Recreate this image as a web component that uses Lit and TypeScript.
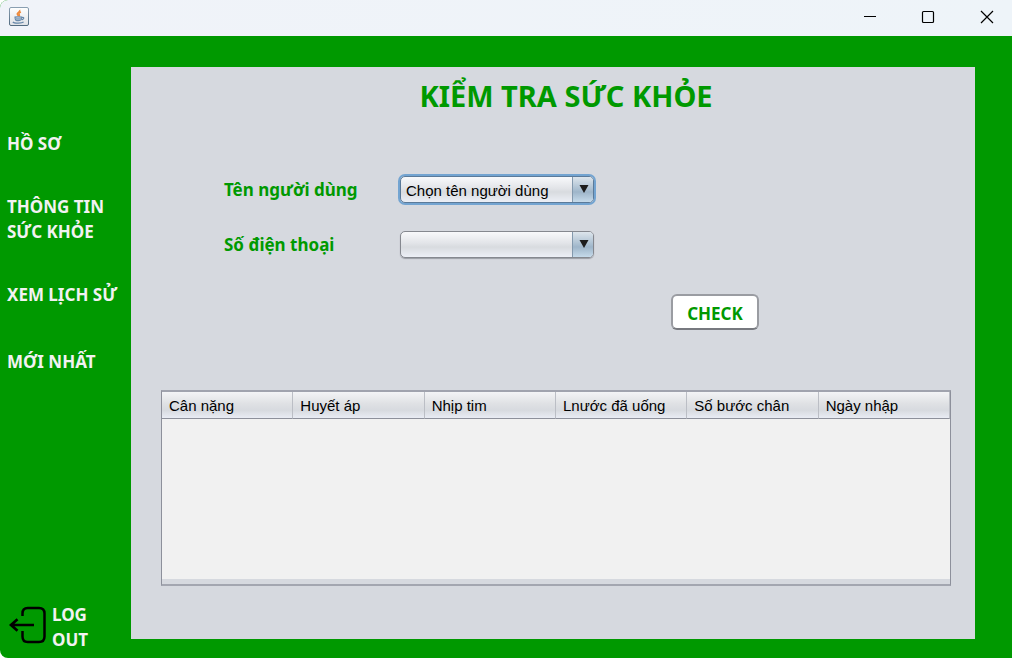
import { LitElement, html, css, svg } from "lit";
import { customElement, property, state } from "lit/decorators.js";

@customElement("title-bar")
class TitleBar extends LitElement {
  static styles = css`
    :host {
      display: flex;
      justify-content: space-between;
      height: 36px;
      background: linear-gradient(90deg, #f0f3f9, #eef4f9);
    }
    .app-icon {
      width: 20px;
      height: 20px;
      margin: 7px 0 0 9px;
    }
    .controls {
      display: flex;
    }
    .control {
      width: 58px;
      padding: 0;
      border: 0;
      background: none;
      display: flex;
      align-items: center;
      justify-content: center;
    }
    .close {
      width: 55px;
      padding-right: 10px;
      justify-content: flex-end;
    }
    .control svg {
      width: 30px;
      height: 30px;
      margin-top: -4px;
    }
  `;

  render() {
    return html`
      <svg class="app-icon" viewBox="0 0 20 20" aria-hidden="true">
        <defs>
          <linearGradient id="tile" x1="0" y1="0" x2="0" y2="1">
            <stop offset="0" stop-color="#fff" />
            <stop offset="1" stop-color="#dfe2e6" />
          </linearGradient>
          <linearGradient id="edge" x1="0" y1="0" x2="0" y2="1">
            <stop offset="0" stop-color="#8a9fb1" />
            <stop offset="1" stop-color="#526b80" />
          </linearGradient>
        </defs>
        <rect x=".5" y=".5" width="19" height="18" rx="1.5" fill="url(#tile)" stroke="url(#edge)" />
        <path d="M10.600 3C11.800 5 7.400 5.500 8.300 7.200 8.700 8 9.400 8.300 9.300 9.200M11.900 5C9.600 6 9.500 6.700 10.300 7.600 10.700 8.100 10.300 8.800 9.900 9.200" fill="none" stroke="#ee8a3c" stroke-width="1.500" />
        <path d="M5.500 10.200C7 9.900 11 9.900 13 10.200M13 10.500C15.500 10 15.200 12.300 12.700 12.800M6 10.500C6.300 13.400 7 13.700 9.500 13.700S12.400 13 12.800 10.500M3.900 14.800C5 16.500 13 16.500 14.600 14.900" fill="none" stroke="#6485a8" stroke-width="1.200" />
        <path d="M6.500 11.600H12.400M6.900 12.700H12" stroke="#8ba5bf" stroke-width="1" />
      </svg>
      <div class="controls">
        <button class="control" aria-label="Minimize">
          <svg viewBox="0 0 30 30"><path d="M9 15.500H21" stroke="#000" fill="none" /></svg>
        </button>
        <button class="control" aria-label="Maximize">
          <svg viewBox="0 0 30 30"><rect x="9.500" y="10.500" width="11" height="11" rx="1" stroke="#000" stroke-width="1.200" fill="none" /></svg>
        </button>
        <button class="control close" aria-label="Close">
          <svg viewBox="0 0 30 30"><path d="M9 10L21 22M21 10L9 22" stroke="#000" stroke-width="1.200" fill="none" /></svg>
        </button>
      </div>
    `;
  }
}

@customElement("side-menu")
class SideMenu extends LitElement {
  static styles = css`
    :host {
      display: flex;
      flex-direction: column;
      justify-content: space-between;
      box-sizing: border-box;
      padding: 95px 0 6px 7px;
      font-family: "Noto Sans", "Open Sans", sans-serif;
    }
    nav {
      display: flex;
      flex-direction: column;
      gap: 38px;
    }
    .item {
      padding: 0;
      border: 0;
      background: none;
      color: #f2f2f2;
      font: inherit;
      font-size: 17px;
      font-weight: 700;
      line-height: 25px;
      text-align: left;
      white-space: pre-line;
    }
    .newest {
      margin-top: 4px;
    }
    .logout {
      display: flex;
      align-items: center;
      gap: 6px;
    }
    .logout svg {
      width: 39px;
      height: 42px;
    }
  `;

  render() {
    return html`
      <nav>
        <button class="item">HỒ SƠ</button>
        <button class="item">${"THÔNG TIN\nSỨC KHỎE"}</button>
        <button class="item">XEM LỊCH SỬ</button>
        <button class="item newest">MỚI NHẤT</button>
      </nav>
      <button class="item logout">
        <svg viewBox="0 5 39 42" fill="none" stroke="#000" stroke-width="2.500" aria-hidden="true">
          <path d="M15.500 15V12.500Q15.500 7 20.700 7H32Q37.500 7 37.500 12.500V35.500Q37.500 41 32 41H20.700Q15.500 41 15.500 35.500V30" />
          <path d="M27 24H4M10.500 18.200L4 24L10.500 29.800" stroke-width="2.700" />
        </svg>
        <span>${"LOG\nOUT"}</span>
      </button>
    `;
  }
}

@customElement("check-form")
class CheckForm extends LitElement {
  static styles = css`
    :host {
      display: grid;
      grid-template-columns: 174px 198px;
      row-gap: 25px;
      align-items: center;
      padding: 0 0 0 63px;
      font-family: "Noto Sans", "Open Sans", sans-serif;
    }
    label {
      color: #009900;
      font-size: 17px;
      font-weight: 700;
      line-height: 24px;
    }
    .combo {
      display: grid;
      grid-template-columns: 1fr 22px;
      height: 30px;
      padding: 1px 2px 3px;
      box-sizing: border-box;
    }
    select {
      grid-area: 1 / 1 / 2 / 3;
      appearance: none;
      min-width: 0;
      height: 27px;
      padding: 2px 26px 0 5px;
      border: 1px solid #85888f;
      border-radius: 5px;
      outline: 0;
      color: #000;
      background: linear-gradient(#f8f9fb, #e2e4e8 45%, #d8dbdf 60%, #eceff6);
      box-shadow: 0 1px 1px #9a9da5;
      font: 15px "Liberation Sans", Arial, sans-serif;
    }
    .active select {
      border-color: #5b7a99;
      box-shadow: 0 0 0 2px #73a4d1;
    }
    .arrow {
      grid-area: 1 / 2;
      z-index: 1;
      height: 25px;
      margin: 1px 1px 0 0;
      border-left: 1px solid #8399ad;
      border-radius: 0 4px 4px 0;
      background: linear-gradient(#dde5ec, #a9bed0 50%, #9eb5c9 60%, #c5daea);
      pointer-events: none;
    }
    .arrow svg {
      display: block;
      width: 20px;
      height: 25px;
    }
    .check {
      grid-column: 2;
      justify-self: end;
      margin: 9px -163px 0 0;
      width: 88px;
      height: 36px;
      padding: 2px 0 0;
      border: 2px solid #9a9ca2;
      border-bottom-color: #77797f;
      border-radius: 6px;
      color: #009900;
      background: #fff;
      font: 700 17px "Noto Sans", "Open Sans", sans-serif;
    }
  `;

  @state() private focused = "user";

  private combo(id: string, options: string[]) {
    return html`
      <div class="combo ${this.focused === id ? "active" : ""}">
        <select id=${id} @focus=${() => (this.focused = id)}>
          ${options.map((o) => html`<option>${o}</option>`)}
        </select>
        <span class="arrow">
          <svg viewBox="0 0 20 25" aria-hidden="true">${svg`<path d="M6.500 8H15.500L11 16Z" fill="#1c1c1c" />`}</svg>
        </span>
      </div>
    `;
  }

  render() {
    return html`
      <label for="user">Tên người dùng</label>
      ${this.combo("user", ["Chọn tên người dùng"])}
      <label for="phone">Số điện thoại</label>
      ${this.combo("phone", [""])}
      <button class="check">CHECK</button>
    `;
  }
}

@customElement("health-table")
class HealthTable extends LitElement {
  static styles = css`
    :host {
      display: flex;
      flex-direction: column;
      box-sizing: border-box;
      border: 1px solid #8d909b;
      border-top: 2px solid #a0a3ae;
      border-bottom: 2px solid #a3a6b0;
      background: #d6d9df;
    }
    .viewport {
      flex: 1;
      margin-bottom: 5px;
      background: #f1f1f1;
    }
    table {
      width: 100%;
      table-layout: fixed;
      border-collapse: separate;
      border-spacing: 0;
    }
    th {
      height: 27px;
      padding: 2px 0 0 7px;
      box-sizing: border-box;
      border-right: 1px solid #bbbec5;
      border-bottom: 1px solid #8d909b;
      background: linear-gradient(#f3f4f6, #dfe1e4 45%, #d7dadf 70%, #e9ecf4);
      color: #000;
      font: 15px/22px "Liberation Sans", Arial, sans-serif;
      text-align: left;
      white-space: nowrap;
    }
  `;

  @property({ attribute: false }) columns: string[] = [];

  render() {
    return html`
      <div class="viewport">
        <table>
          <thead>
            <tr>
              ${this.columns.map((c) => html`<th scope="col">${c}</th>`)}
            </tr>
          </thead>
          <tbody></tbody>
        </table>
      </div>
    `;
  }
}

@customElement("app-root")
class AppRoot extends LitElement {
  static styles = css`
    :host {
      display: flex;
      flex-direction: column;
      min-height: 100vh;
      overflow: hidden;
      border-radius: 8px 0 0 8px;
      background: #009900;
    }
    .content {
      flex: 1;
      display: grid;
      grid-template-columns: 131px 1fr;
    }
    .panel {
      display: flex;
      flex-direction: column;
      margin: 31px 37px 19px 0;
      padding: 8px 24px 53px 30px;
      background: #d6d9df;
    }
    h1 {
      margin: 0 0 58px;
      padding-left: 20px;
      color: #009900;
      font: 700 29px/42px "Noto Sans", "Open Sans", sans-serif;
      text-align: center;
    }
    health-table {
      flex: 1;
      margin-top: 60px;
      min-height: 120px;
    }
  `;

  private columns = ["Cân nặng", "Huyết áp", "Nhịp tim", "Lnước đã uống", "Số bước chân", "Ngày nhập"];

  render() {
    return html`
      <title-bar></title-bar>
      <div class="content">
        <side-menu></side-menu>
        <main class="panel">
          <h1>KIỂM TRA SỨC KHỎE</h1>
          <check-form></check-form>
          <health-table .columns=${this.columns}></health-table>
        </main>
      </div>
    `;
  }
}
